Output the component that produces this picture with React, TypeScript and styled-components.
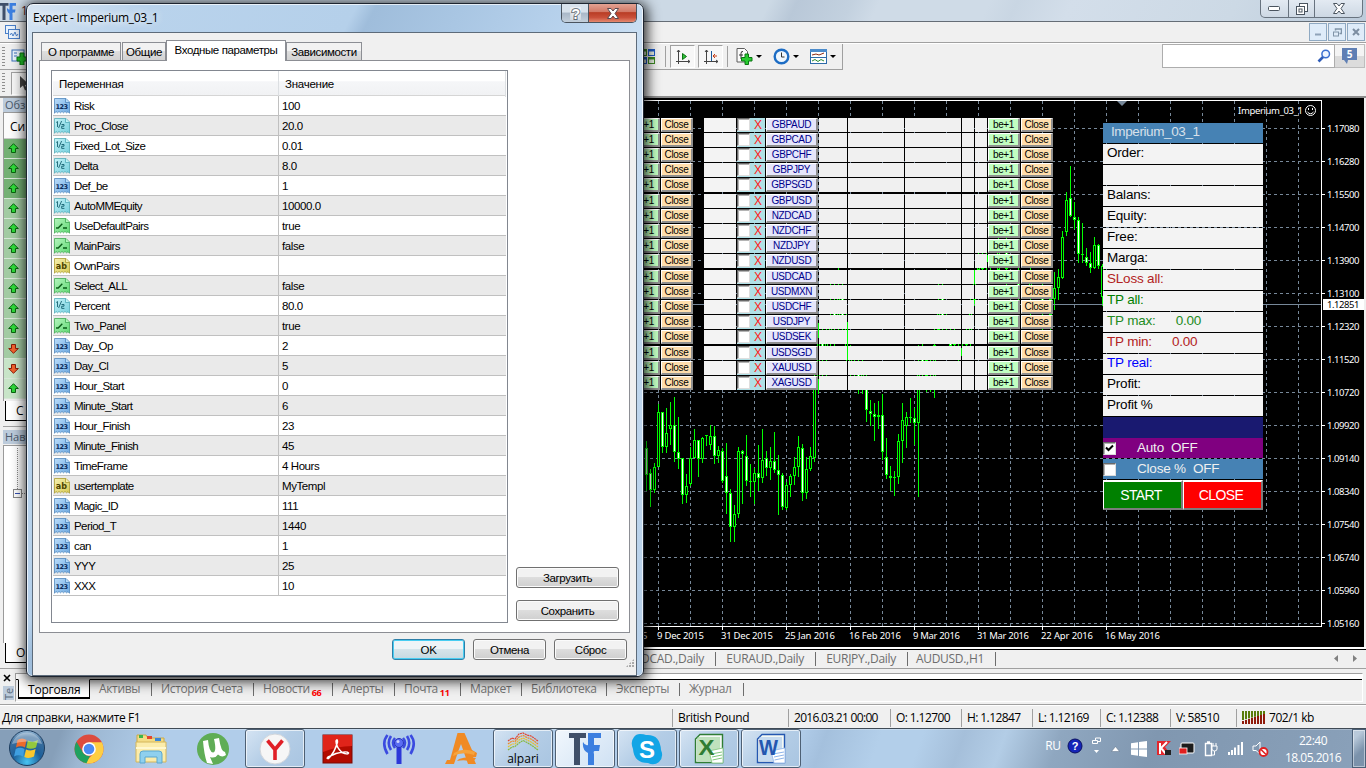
import React from "react";
import styled, { createGlobalStyle, css } from "styled-components";

const UI = `"Open Sans", "Noto Sans", sans-serif`;
const SANS = `"Liberation Sans", Arial, sans-serif`;

const Global = createGlobalStyle`
  * { box-sizing: border-box; }
  body { margin: 0; overflow: hidden; background: #000; }
  svg { display: block; flex: none; }
`;

const Desktop = styled.div`
  position: relative;
  width: 1366px;
  height: 768px;
  overflow: hidden;
  display: flex;
  flex-direction: column;
  background: #f0f0f0;
  font: 12px ${UI};
  color: #000;
  white-space: pre;
`;

/* ---------- main window chrome ---------- */

const TitleBar = styled.div`
  height: 22px;
  flex: none;
  display: flex;
  justify-content: space-between;
  border-bottom: 1px solid #656d76;
  background: linear-gradient(115deg, #ccd9e5 0 56%, #b9c8d8 58%, #c3d1df 62%, #cfdbe7 64% 72%, #c9d6e3 74%, #d3deea 78%, #ccd9e5 90%, #bccbdb 100%);
`;

const AppTitle = styled.div`
  display: flex;
  gap: 5px;
  padding-top: 3px;
  line-height: 15px;
  color: #5a1a1a;
`;

const WindowButtons = styled.div`
  display: flex;
  width: 103px;
  height: 18px;
  margin-right: 3px;
  border: 1px solid #68737f;
  border-top: 0;
  border-radius: 0 0 5px 5px;
  background: linear-gradient(#e3eaf2, #cdd8e4);
  overflow: hidden;
`;

const WindowButton = styled.div<{ $w: number }>`
  width: ${(p) => p.$w}px;
  display: flex;
  align-items: center;
  justify-content: center;
  border-right: 1px solid #68737f;
  &:last-child { border-right: 0; }
`;

const MenuBar = styled.div`
  height: 22px;
  flex: none;
  display: flex;
  align-items: center;
  justify-content: space-between;
  padding: 0 1px 1px 4px;
  border-bottom: 1px solid #fff;
  box-shadow: inset 0 -1px 0 #a0a0a0;
`;

const MdiButtons = styled.div`
  display: flex;
  gap: 1px;
`;

const MdiButton = styled.div`
  width: 18px;
  height: 18px;
  display: flex;
  align-items: center;
  justify-content: center;
  border: 1px solid #8fa9c2;
  background: #dfecf9;
`;

const ToolArea = styled.div`
  height: 52px;
  flex: none;
  display: flex;
  justify-content: space-between;
`;

const ToolBars = styled.div`
  width: 843px;
`;

const ToolBar = styled.div<{ $bordered?: boolean }>`
  height: 26px;
  display: flex;
  align-items: center;
  padding: 0 0 0 2px;
  ${(p) => p.$bordered && css`
    border-right: 1px solid #a0a0a0;
    border-bottom: 1px solid #a0a0a0;
  `}
`;

const Grip = styled.div`
  width: 3px;
  height: 20px;
  background: repeating-linear-gradient(#8f8f8f 0 1px, transparent 1px 3px);
`;

const LeftTools = styled.div`
  display: flex;
  align-items: center;
  gap: 6px;
  flex: none;
  width: 638px;
`;

const PressedTool = styled.div`
  width: 25px;
  height: 23px;
  flex: none;
  display: flex;
  align-items: center;
  justify-content: center;
  border: 1px solid #a0a0a0;
  border-right-color: #fff;
  border-bottom-color: #fff;
  background: #f7f7f7;
`;

const PressedPair = styled.div`
  display: flex;
  gap: 3px;
`;

const ToolSeparator = styled.div<{ $l: number; $r: number }>`
  width: 1px;
  height: 21px;
  flex: none;
  margin: 0 ${(p) => p.$r}px 0 ${(p) => p.$l}px;
  background: #a0a0a0;
`;

const DropTool = styled.div`
  display: flex;
  align-items: center;
  flex: none;
  width: 37px;
  gap: 3px;
`;

const Caret = styled.div`
  border: 3px solid transparent;
  border-top: 3px solid #000;
  border-bottom: 0;
`;

const SearchGroup = styled.div`
  display: flex;
  height: 24px;
  margin: 0 1px;
`;

const SearchBox = styled.div`
  width: 173px;
  display: flex;
  align-items: center;
  justify-content: flex-end;
  padding-right: 3px;
  border: 1px solid #adadad;
  background: #fff;
`;

const ChatButton = styled.div`
  width: 30px;
  display: flex;
  align-items: center;
  justify-content: center;
  border: 1px solid #bdbdbd;
  border-left: 0;
  background: linear-gradient(#f4f4f4 50%, #dcdcdc 50%);
`;

/* ---------- workspace ---------- */

const Workspace = styled.div`
  height: 572px;
  flex: none;
  display: flex;
  border-top: 2px solid #8d8d8d;
`;

const Dock = styled.div`
  width: 620px;
  flex: none;
  padding-left: 3px;
`;

const DockTitle = styled.div`
  height: 14px;
  padding-left: 2px;
  font-size: 11px;
  line-height: 13px;
  color: #4b5a6b;
  background: #bccbdb;
`;

const MarketList = styled.div`
  height: 289px;
  border-left: 1px solid #9a9a9a;
  border-top: 1px solid #9a9a9a;
`;

const MarketHead = styled.div`
  height: 26px;
  padding: 5px 0 0 6px;
  background: #fbfbfb;
  border-bottom: 1px solid #c8c8c8;
`;

const MarketRow = styled.div<{ $bg: string }>`
  height: 20px;
  padding: 4px 0 0 4px;
  border-bottom: 1px solid #d7e6d7;
  background: ${(p) => p.$bg};
`;

const DockTab = styled.div`
  width: 60px;
  height: 20px;
  margin-left: 2px;
  padding: 0 0 0 10px;
  line-height: 19px;
  border: 1px solid #000;
  border-top: 0;
  background: #fff;
`;

const TreeBox = styled.div`
  height: 198px;
  margin-top: 1px;
  border-left: 1px solid #9a9a9a;
  border-top: 1px solid #9a9a9a;
  background: #fff;
`;

const ChartWindow = styled.div`
  flex: 1;
  display: flex;
  flex-direction: column;
`;

const ChartArea = styled.div`
  position: relative;
  height: 549px;
  width: 744px;
  background: #000;
`;

const ChartTabs = styled.div`
  height: 21px;
  display: flex;
  align-items: center;
  border-top: 2px solid #fff;
  box-shadow: inset 0 1px 0 #000;
  color: #6d6d6d;
  letter-spacing: -0.3px;
`;

const ChartTab = styled.div<{ $w: number }>`
  width: ${(p) => p.$w}px;
  height: 14px;
  line-height: 13px;
  padding-right: 11px;
  text-align: right;
  border-right: 1px solid #6d6d6d;
`;

const ScrollArrows = styled.div`
  margin-left: auto;
  margin-right: 8px;
  display: flex;
  gap: 14px;
`;

/* ---------- pair panel over the chart ---------- */

const PairPanel = styled.div<{ $x: number }>`
  position: absolute;
  left: ${(p) => p.$x}px;
  top: 20px;
  display: flex;
  flex-direction: column;
  gap: 2px;
  font: 10px ${SANS};
`;

const PairGroup = styled.div`
  display: grid;
  gap: 1px;
`;

const PairRow = styled.div<{ $cols: string }>`
  display: grid;
  height: 14px;
  column-gap: 1px;
  grid-template-rows: 14px;
  grid-template-columns: ${(p) => p.$cols};
`;

const Cell = styled.div<{ $bg?: string }>`
  background: ${(p) => p.$bg ?? "#f0f0f0"};
`;

const PairButton = styled.div<{ $bg: string; $fg?: string }>`
  height: 14px;
  border: 1px solid #fff;
  border-right: 2px solid #8f8f8f;
  border-bottom: 2px solid #8f8f8f;
  background: ${(p) => p.$bg};
  color: ${(p) => p.$fg ?? "#000"};
  line-height: 12px;
  text-align: center;
  letter-spacing: -0.35px;
`;

const CheckCell = styled.div`
  display: grid;
  grid-template-columns: 13px 16px;
  height: 14px;
  background: #b0e0e6;
  color: #ff2020;
  font-size: 12px;
  line-height: 14px;
  text-align: center;
`;

const CheckBox = styled.span`
  display: flex;
  align-items: center;
  justify-content: center;
  width: 13px;
  height: 13px;
  background: #fff;
  border: 1px solid #dedede;
  border-top-color: #6a6a6a;
  border-left-color: #6a6a6a;
  box-shadow: inset 1px 1px 0 #b4b4b4;
`;

/* ---------- info panel over the chart ---------- */

const InfoPanel = styled.div`
  position: absolute;
  left: 483px;
  top: 25px;
  width: 160px;
  font: 13.5px ${SANS};
  letter-spacing: -0.2px;
`;

const InfoRow = styled.div<{ $bg?: string; $fg?: string; $h?: number; $gap?: number }>`
  height: ${(p) => p.$h ?? 20}px;
  margin-bottom: ${(p) => p.$gap ?? 1}px;
  padding-left: 4px;
  line-height: 18px;
  background: ${(p) => p.$bg ?? "#f3f3f3"};
  color: ${(p) => p.$fg ?? "#000"};
`;

const HeadRow = styled(InfoRow)`
  padding-left: 8px;
  letter-spacing: -0.4px;
`;

const InfoValue = styled.span<{ $ml: number }>`
  margin-left: ${(p) => p.$ml}px;
`;

const SwitchRow = styled(InfoRow)`
  display: flex;
  align-items: center;
  padding-left: 0;
  gap: 21px;
`;

const ActionRow = styled.div`
  display: grid;
  grid-template-columns: 80px 80px;
  height: 30px;
`;

const ActionButton = styled.div<{ $bg: string }>`
  display: flex;
  align-items: center;
  justify-content: center;
  padding-right: 3px;
  border: 2px solid #fff;
  border-left-width: 1px;
  border-right-color: #7c7c7c;
  border-bottom-color: #7c7c7c;
  background: ${(p) => p.$bg};
  color: #fff;
  font-size: 14px;
  letter-spacing: -0.6px;
`;

/* ---------- terminal strip, status bar ---------- */

const Terminal = styled.div`
  height: 36px;
  flex: none;
  display: flex;
  border-top: 1px solid #a0a0a0;
`;

const TerminalSide = styled.div`
  width: 15px;
  padding: 5px 0 0 3px;
  font-size: 11px;
`;

const SideLabel = styled.div`
  width: 11px;
  height: 14px;
  margin-top: 4px;
  writing-mode: vertical-rl;
  transform: rotate(180deg);
  line-height: 11px;
  color: #5a6a7a;
  background: #bccbdb;
`;

const TerminalBody = styled.div`
  flex: 1;
  margin: 4px 3px 2px 0;
  border: 1px solid #a0a0a0;
  border-right-color: #fff;
  border-bottom-color: #fff;
  background: linear-gradient(#fff 5px, #000 5px 6px, #f0f0f0 6px);
`;

const TerminalTabs = styled.div`
  display: flex;
  padding: 5px 0 0 2px;
  color: #747474;
  font-size: 12px;
`;

const TerminalTab = styled.div<{ $w: number; $active?: boolean }>`
  width: ${(p) => p.$w}px;
  height: 20px;
  padding-left: 9px;
  line-height: 19px;
  letter-spacing: -0.35px;
  ${(p) => p.$active
    ? css`
        border: 1px solid #000;
        border-top-color: #fff;
        border-bottom-width: 2px;
        background: #fff;
        color: #000;
        letter-spacing: -0.2px;
      `
    : css`
        background: linear-gradient(#6d6d6d, #6d6d6d) right 4px / 1px 13px no-repeat;
      `}
`;

const Badge = styled.sub`
  margin-left: 2px;
  color: #f00;
  font: bold 9px/1 ${UI};
  letter-spacing: -0.3px;
  vertical-align: -3px;
`;

const StatusBar = styled.div`
  height: 25px;
  flex: none;
  display: flex;
  align-items: center;
  padding: 2px 0 0 2px;
  border-top: 1px solid #a0a0a0;
  border-bottom: 1px solid #3f4a55;
  box-shadow: inset 0 1px 0 #fff;
`;

const StatusCell = styled.div<{ $w: number; $ls?: number }>`
  width: ${(p) => p.$w}px;
  height: 18px;
  line-height: 17px;
  padding-left: 5px;
  border-left: 1px solid #a0a0a0;
  display: flex;
  align-items: center;
  gap: 4px;
  letter-spacing: ${(p) => p.$ls ?? -0.6}px;
`;

const StatusHint = styled.div`
  width: 670px;
  letter-spacing: -0.38px;
`;

/* ---------- taskbar ---------- */

const TaskBar = styled.div`
  height: 39px;
  flex: none;
  display: flex;
  align-items: center;
  background:
    linear-gradient(rgba(255,255,255,.25) 0 1px, transparent 1px),
    linear-gradient(110deg, #869fb9 0 4.5%, #9cb7d2 6.5%, #b1cdea 12% 58%, #a4c0dd 60%, #b3cfea 64% 67%, #a5bfda 70%, #b3cde6 73%, #8fa7c0 77%, #8097b0 84%, #8aa1ba 100%);
`;

const StartSlot = styled.div`
  width: 58px;
  height: 39px;
  padding-left: 8px;
`;

const TaskSlot = styled.div<{ $state?: "open" | "active" }>`
  width: 60px;
  height: 39px;
  margin: 0 1px;
  display: flex;
  align-items: center;
  justify-content: center;
  ${(p) => p.$state && css`
    border: 1px solid #4e6074;
    border-radius: 3px;
    box-shadow: inset 0 0 0 1px rgba(255, 255, 255, 0.65);
    background: ${p.$state === "active"
      ? "linear-gradient(135deg, #f1f7fd, #cfe1f3)"
      : "linear-gradient(135deg, #d5e4f3 0, #b4cde6 50%, #a9c5e1 100%)"};
  `}
`;

const Tray = styled.div`
  margin-left: auto;
  display: flex;
  align-items: center;
  height: 39px;
  color: #fff;
`;

const TrayItem = styled.div<{ $w: number }>`
  width: ${(p) => p.$w}px;
  display: flex;
  justify-content: center;
  letter-spacing: -0.4px;
`;

const TrayTop = styled(TrayItem)`
  margin-bottom: 6px;
`;

const TrayClock = styled.div`
  width: 78px;
  text-align: center;
  line-height: 17px;
  letter-spacing: -0.5px;
`;

const ShowDesktop = styled.div`
  width: 14px;
  height: 39px;
  border: 1px solid #4b6078;
  box-shadow: inset 0 0 0 1px rgba(255, 255, 255, 0.45);
  background: linear-gradient(135deg, #b9c9da 20%, #7b92ab 60%);
`;

/* ---------- dialog ---------- */

const Dialog = styled.div`
  position: absolute;
  left: 26px;
  top: 3px;
  width: 618px;
  height: 674px;
  display: flex;
  flex-direction: column;
  padding: 0 6px 6px 5px;
  border: 1px solid #1e2530;
  border-radius: 7px 7px 6px 6px;
  background: linear-gradient(118deg, #d6e4f2 0, #b9d3ec 12%, #b5d0ea 34%, #9fbddb 36%, #a9c6e3 45%, #bad4ee 58%, #c9def2 64%, #b6cfe8 100%);
  box-shadow: inset 0 0 0 1px rgba(255, 255, 255, 0.7), 1px 2px 13px 2px rgba(0, 0, 0, 0.85);
`;

const DialogTitle = styled.div`
  display: flex;
  justify-content: space-between;
  height: 28px;
  flex: none;
  padding-left: 1px;
  line-height: 28px;
  letter-spacing: -0.32px;
  text-shadow: 0 0 8px #fff, 0 0 8px #fff;
`;

const DialogButtons = styled.div`
  display: flex;
  width: 76px;
  height: 19px;
  border: 1px solid #4a545f;
  border-top: 0;
  border-radius: 0 0 5px 5px;
  overflow: hidden;
`;

const HelpButton = styled.div`
  width: 27px;
  display: flex;
  justify-content: center;
  align-items: center;
  background: linear-gradient(#d8e2ec 45%, #a9b8c8 50%, #c3cfdb);
  border-right: 1px solid #4a545f;
`;

const CloseButton = styled.div`
  flex: 1;
  display: flex;
  justify-content: center;
  align-items: center;
  background: linear-gradient(#e3a292, #d27a68 42%, #b93d25 48%, #c9503a 75%, #e58a70);
`;

const DialogClient = styled.div`
  flex: 1;
  display: flex;
  flex-direction: column;
  border: 1px solid #5d6b7a;
  background: #f0f0f0;
  padding: 7px 6px 8px 6px;
  font: 11.5px ${SANS};
  letter-spacing: -0.38px;
`;

const TabStrip = styled.div`
  display: flex;
  align-items: flex-end;
  height: 20px;
  flex: none;
  padding-left: 2px;
`;

const DialogTab = styled.div<{ $w: number; $gap?: number; $active?: boolean }>`
  width: ${(p) => p.$w}px;
  height: ${(p) => (p.$active ? 21 : 18)}px;
  margin-bottom: ${(p) => (p.$active ? -1 : 0)}px;
  margin-right: ${(p) => p.$gap ?? 0}px;
  position: relative;
  line-height: ${(p) => (p.$active ? 19 : 18)}px;
  text-align: center;
  border: 1px solid #8c8e94;
  border-bottom: 0;
  background: ${(p) => (p.$active ? "#fff" : "linear-gradient(#f2f2f2 45%, #dedede 50%, #d2d2d2)")};
`;

const TabPage = styled.div`
  height: 573px;
  flex: none;
  width: 591px;
  display: flex;
  padding: 9px 10px 9px 11px;
  border: 1px solid #8c8e94;
  background: #fff;
`;

const ParamTable = styled.div`
  width: 457px;
  height: 553px;
  border: 1px solid #828790;
  padding: 0 1px;
`;

const ParamHead = styled.div`
  display: grid;
  grid-template-columns: 226px 1fr;
  height: 25px;
  border-bottom: 1px solid #d5d5d5;
  background: linear-gradient(#fff 40%, #f5f6f8 45%, #f1f2f4);
  line-height: 26px;
  letter-spacing: -0.25px;
  & > span { padding-left: 6px; border-right: 1px solid #dcdfe2; }
`;

const ParamRow = styled.div<{ $alt: boolean }>`
  display: grid;
  grid-template-columns: 225px 1fr;
  height: 20px;
  border-bottom: 1px solid #c0c0c0;
  background: ${(p) => (p.$alt ? "#eaeaea" : "#fff")};
  line-height: 20px;
  letter-spacing: -0.57px;
`;

const ParamName = styled.div`
  display: flex;
  align-items: center;
  gap: 4px;
  padding-left: 1px;
`;

const ParamValue = styled.div`
  padding-left: 3px;
  border-left: 1px solid #c0c0c0;
  letter-spacing: -0.42px;
`;

const SideButtons = styled.div`
  display: flex;
  flex-direction: column;
  justify-content: flex-end;
  gap: 12px;
  padding: 0 0 2px 8px;
`;

const Button = styled.div<{ $w: number; $primary?: boolean }>`
  width: ${(p) => p.$w}px;
  height: 21px;
  line-height: 20px;
  text-align: center;
  border: 1px solid ${(p) => (p.$primary ? "#2d7fa8" : "#707070")};
  border-radius: 3px;
  box-shadow: ${(p) => (p.$primary ? "inset 0 0 0 1px #48cdf2" : "inset 0 0 0 1px #fbfbfb")};
  background: linear-gradient(#f2f2f2 45%, #dddddd 50%, #cfcfcf);
  ${(p) => p.$primary && css`background: linear-gradient(#eef4f7 45%, #d5e4ea 50%, #c6d9e1);`}
`;

const DialogFooter = styled.div`
  display: flex;
  justify-content: flex-end;
  gap: 8px;
  padding: 6px 3px 0 0;
`;

const SizeGrip = styled.div`
  width: 8px;
  height: 8px;
  margin: -1px -4px 0 auto;
  background: radial-gradient(circle at 1px 1px, #a9a9a9 1px, transparent 1.2px) 0 0 / 3px 3px;
  clip-path: polygon(100% 0, 100% 100%, 0 100%);
`;

/* ---------- data ---------- */

type Kind = "int" | "real" | "bool" | "str";
const params: [Kind, string, string][] = [
  ["int", "Risk", "100"],
  ["real", "Proc_Close", "20.0"],
  ["real", "Fixed_Lot_Size", "0.01"],
  ["real", "Delta", "8.0"],
  ["int", "Def_be", "1"],
  ["real", "AutoMMEquity", "10000.0"],
  ["bool", "UseDefaultPairs", "true"],
  ["bool", "MainPairs", "false"],
  ["str", "OwnPairs", ""],
  ["bool", "Select_ALL", "false"],
  ["real", "Percent", "80.0"],
  ["bool", "Two_Panel", "true"],
  ["int", "Day_Op", "2"],
  ["int", "Day_Cl", "5"],
  ["int", "Hour_Start", "0"],
  ["int", "Minute_Start", "6"],
  ["int", "Hour_Finish", "23"],
  ["int", "Minute_Finish", "45"],
  ["int", "TimeFrame", "4 Hours"],
  ["str", "usertemplate", "MyTempl"],
  ["int", "Magic_ID", "111"],
  ["int", "Period_T", "1440"],
  ["int", "can", "1"],
  ["int", "YYY", "25"],
  ["int", "XXX", "10"],
];

const kinds: Record<Kind, { hi: string; lo: string; line: string; ink: string }> = {
  int: { hi: "#b9dcfb", lo: "#6fa9e0", line: "#4f86bd", ink: "#0b2c5c" },
  real: { hi: "#c3f3f8", lo: "#76cfdd", line: "#4fa9b8", ink: "#15616f" },
  bool: { hi: "#b4f5bd", lo: "#5fd873", line: "#3fa852", ink: "#0a5c18" },
  str: { hi: "#f6f0b0", lo: "#d9cb55", line: "#a89a30", ink: "#4c4200" },
};

const pairGroups = [
  ["GBPAUD", "GBPCAD", "GBPCHF", "GBPJPY", "GBPSGD"],
  ["GBPUSD", "NZDCAD", "NZDCHF", "NZDJPY", "NZDUSD"],
  ["USDCAD", "USDMXN", "USDCHF", "USDJPY", "USDSEK"],
  ["USDSGD", "XAUUSD", "XAGUSD"],
];

/* x, high, low, body top, body bottom, filled */
type Candle = [number, number, number, number, number, 0 | 1];
const candles: Candle[] = [
  [646, 441, 491, 448, 475, 1], [650, 469, 507, 473, 490, 1], [654, 463, 493, 467, 490, 0],
  [658, 404, 467, 412, 467, 0], [662, 412, 453, 412, 447, 1], [666, 408, 453, 433, 447, 0],
  [670, 402, 445, 425, 429, 0], [674, 397, 462, 425, 452, 1], [678, 417, 469, 452, 459, 1],
  [682, 458, 504, 458, 495, 1], [686, 474, 503, 486, 495, 0], [690, 447, 486, 458, 484, 0],
  [694, 429, 458, 440, 458, 0], [698, 440, 477, 440, 459, 1], [702, 437, 463, 438, 459, 0],
  [706, 435, 446, 435, 436, 0], [710, 425, 450, 436, 445, 0], [714, 426, 464, 436, 456, 1],
  [718, 446, 463, 450, 456, 0], [722, 448, 483, 451, 481, 1], [726, 443, 514, 476, 493, 1],
  [730, 489, 542, 493, 527, 1], [734, 505, 542, 514, 527, 0], [738, 447, 518, 451, 514, 0],
  [742, 450, 504, 451, 454, 1], [746, 435, 486, 456, 481, 1], [750, 464, 497, 481, 482, 0],
  [754, 468, 504, 473, 482, 0], [758, 445, 491, 473, 478, 1], [762, 429, 483, 460, 478, 0],
  [766, 451, 476, 458, 468, 1], [770, 447, 480, 461, 468, 0], [774, 432, 473, 461, 470, 1],
  [778, 455, 515, 470, 475, 1], [782, 473, 510, 475, 507, 1], [786, 482, 510, 485, 508, 0],
  [790, 474, 497, 476, 485, 0], [794, 457, 485, 467, 476, 0], [798, 436, 477, 447, 467, 0],
  [802, 444, 501, 448, 493, 1], [806, 457, 499, 469, 493, 0], [810, 447, 471, 456, 469, 0],
  [814, 375, 462, 385, 458, 0], [818, 323, 394, 337, 380, 0], [822, 329, 376, 340, 360, 1],
  [826, 328, 376, 336, 350, 0], [830, 284, 350, 318, 340, 0], [834, 284, 346, 300, 325, 1],
  [838, 268, 330, 290, 318, 0], [842, 284, 330, 298, 322, 1], [846, 310, 361, 322, 360, 0],
  [850, 345, 376, 352, 366, 0], [854, 360, 380, 366, 372, 1], [858, 358, 394, 374, 380, 1],
  [862, 360, 394, 374, 384, 0], [866, 362, 422, 376, 410, 1], [870, 400, 426, 411, 414, 1],
  [874, 403, 441, 414, 417, 1], [878, 401, 429, 415, 417, 0], [882, 394, 460, 415, 452, 1],
  [886, 438, 479, 457, 475, 1], [890, 466, 491, 476, 478, 1], [894, 471, 496, 477, 478, 0],
  [898, 434, 484, 441, 477, 0], [902, 403, 463, 420, 441, 0], [906, 412, 448, 417, 426, 0],
  [910, 398, 423, 417, 418, 0], [914, 408, 445, 418, 423, 1], [918, 345, 497, 370, 423, 0],
  [922, 344, 380, 350, 372, 1], [926, 352, 392, 360, 376, 0], [930, 358, 392, 362, 372, 1],
  [934, 329, 398, 345, 380, 0], [938, 284, 340, 300, 330, 0], [942, 284, 332, 298, 324, 1],
  [946, 312, 340, 318, 328, 0], [950, 328, 350, 334, 346, 1], [954, 328, 348, 338, 345, 0],
  [958, 344, 361, 348, 356, 1], [962, 340, 356, 348, 356, 0], [966, 328, 346, 332, 345, 0],
  [970, 299, 350, 306, 340, 0], [974, 270, 306, 283, 300, 0], [978, 252, 280, 262, 270, 0],
  [982, 252, 276, 258, 269, 1], [986, 250, 272, 255, 262, 0], [990, 254, 270, 258, 266, 0],
  [998, 238, 278, 250, 270, 0], [1006, 236, 290, 245, 269, 1], [1018, 262, 300, 270, 290, 1],
  [1030, 268, 315, 280, 299, 0], [1042, 284, 330, 298, 314, 1], [1050, 290, 330, 299, 315, 1],
  [1054, 272, 310, 288, 299, 0], [1058, 269, 300, 277, 288, 0], [1062, 231, 279, 237, 278, 0],
  [1066, 192, 236, 200, 232, 0], [1070, 166, 217, 198, 216, 1], [1074, 202, 229, 217, 220, 1],
  [1078, 217, 263, 220, 254, 1], [1082, 223, 263, 254, 255, 0], [1086, 248, 266, 257, 263, 1],
  [1090, 252, 273, 263, 268, 1], [1094, 237, 269, 245, 268, 0], [1098, 244, 269, 245, 266, 1],
  [1102, 264, 306, 266, 297, 0],
];

const prices = ["1.17080", "1.16280", "1.15500", "1.14700", "1.13900", "1.13100", "1.12320", "1.11520", "1.10720", "1.09920", "1.09140", "1.08340", "1.07540", "1.06740", "1.05960", "1.05160"];
const dates: [string, number][] = [
  ["9 Dec 2015", 47], ["31 Dec 2015", 52], ["25 Jan 2016", 50], ["16 Feb 2016", 52],
  ["9 Mar 2016", 47], ["31 Mar 2016", 52], ["22 Apr 2016", 52], ["16 May 2016", 55],
];

/* ---------- drawings ---------- */

const KindIcon = ({ kind }: { kind: Kind }) => {
  const c = kinds[kind];
  return (
    <svg width="16" height="16" viewBox="0 0 16 16">
      <defs>
        <linearGradient id={`k-${kind}`} x1="0" y1="0" x2="1" y2="1">
          <stop offset="0" stopColor={c.hi} />
          <stop offset="1" stopColor={c.lo} />
        </linearGradient>
      </defs>
      <path d="M.5.5H12L15.5 4V15.3L14 13.7 12.5 14.8 11 13.4 9.5 14.8 8 13.4 6.5 14.8 5 13.4 3.5 14.8 2 13.4.5 15.3Z" fill={`url(#k-${kind})`} stroke={c.line} strokeWidth=".8" />
      <path d="M11.5.5V4.5H15.5" fill={c.hi} stroke={c.line} strokeWidth=".8" />
      {kind === "int" && <text x="1.6" y="11.2" fontFamily="DejaVu Sans" fontWeight="700" fontSize="6.6" textLength="12" fill={c.ink}>123</text>}
      {kind === "real" && (
        <>
          <path d="M2.2 4.5L3.5 3.5V9M7.6 3L4.6 10" fill="none" stroke={c.ink} strokeWidth=".9" />
          <path d="M7.5 6.5H10V8.2H7.7V10.4H10.4" fill="none" stroke={c.ink} strokeWidth=".9" />
        </>
      )}
      {kind === "bool" && <path d="M2 10H4.2L8.3 5.8M9 10H13" fill="none" stroke={c.ink} strokeWidth="1.4" />}
      {kind === "str" && <text x="1.8" y="10.8" fontFamily="DejaVu Sans" fontWeight="700" fontSize="8" textLength="10.5" fill={c.ink}>ab</text>}
    </svg>
  );
};

const Chart = () => (
  <svg width="744" height="549" viewBox="620 98 744 549" shapeRendering="crispEdges">
    <g stroke="#778899" strokeDasharray="3 3">
      {Array.from({ length: 21 }, (_, i) => (
        <path key={i} d={`M${658.5 + i * 32} 101V626`} />
      ))}
      {prices.map((_, i) => (
        <path key={i} d={`M620 ${128.5 + i * 33}H1321`} />
      ))}
    </g>
    {candles.map(([x, hi, lo, t, b, f]) => (
      <g key={x}>
        <rect x={x} y={hi} width="1" height={lo - hi} fill="#0f0" />
        <rect x={x - 1} y={t} width="3" height={Math.max(1, b - t)} fill="#0f0" />
        {b - t > 2 && <rect x={x} y={t + 1} width="1" height={b - t - 2} fill={f ? "#fff" : "#000"} />}
      </g>
    ))}
    <path d="M620 304.5H1321" stroke="#778899" />
    <path d="M620 100.5H1321.5V626.5H620" fill="none" stroke="#fff" />
    {prices.map((p, i) => (
      <g key={p}>
        <path d={`M1322 ${128.5 + i * 33}H1325`} stroke="#fff" />
        <text x="1327" y={132 + i * 33} fontFamily="Noto Sans" fontSize="9.5" textLength="32.5" fill="#fff">{p}</text>
      </g>
    ))}
    <rect x="1323" y="299" width="41" height="11" fill="#fff" />
    <text x="1327" y="308" fontFamily="Noto Sans" fontSize="9.5" textLength="32.5" fill="#000">1.12851</text>
    <text x="642" y="639" fontFamily="Noto Sans" fontSize="9.5" fill="#fff">5</text>
    {dates.map(([d, w], i) => (
      <g key={d}>
        <path d={`M${658.5 + i * 64} 627V630`} stroke="#fff" />
        <text x={657 + i * 64} y="639" fontFamily="Noto Sans" fontSize="9.5" textLength={w} fill="#fff">{d}</text>
      </g>
    ))}
    <path d="M1117 101H1127L1122 106Z" fill="#778899" shapeRendering="auto" />
    <text x="1238" y="113.5" fontFamily="Noto Sans" fontSize="9.5" textLength="65" fill="#fff">Imperium_03_1</text>
    <g shapeRendering="auto" stroke="#fff" fill="none">
      <circle cx="1310.5" cy="110.5" r="5" />
      <path d="M1307.5 112Q1310.5 115.5 1313.5 112M1308.5 108V110M1312.5 108V110" />
    </g>
  </svg>
);

const MarketArrow = ({ up }: { up: boolean }) => (
  <svg width="11" height="11" viewBox="0 0 11 11">
    <path
      d={up ? "M5.5.7L10.3 5.5H7.5V9.5H3.5V5.5H.7Z" : "M5.5 10.3L10.3 5.5H7.5V1.5H3.5V5.5H.7Z"}
      fill={up ? "#2fd83a" : "#f2622e"}
      stroke={up ? "#0a6410" : "#8c1c08"}
    />
  </svg>
);

const TfLogo = ({ w, h }: { w: number; h: number }) => (
  <svg width={w} height={h} viewBox="0 0 32 32" preserveAspectRatio="none">
    <path d="M0 0H17V5H11V32H5V5H0Z" fill="#3f4f69" />
    <path d="M19 0H32V5H25V12H31L30 18H26Q24 18 25 21V32H19V20Q13 17 14 9Q16 13 19 12Z" fill="#3c7fe0" />
  </svg>
);

const Orb = () => (
  <svg width="38" height="38" viewBox="0 0 38 38">
    <defs>
      <radialGradient id="orb" cx=".5" cy=".9" r=".9">
        <stop offset="0" stopColor="#48c4f2" />
        <stop offset=".45" stopColor="#1c5f9a" />
        <stop offset=".8" stopColor="#3c6f9e" />
        <stop offset="1" stopColor="#9fc0dc" />
      </radialGradient>
    </defs>
    <circle cx="19" cy="19" r="17.5" fill="url(#orb)" stroke="#1c3c5e" />
    <path d="M9.5 11Q14 8 18.5 11L17 18.5Q12.5 16 8 18.5Z" fill="#ec6a2b" />
    <path d="M19.8 11.5Q24.5 14 30 11L28 18.5Q23 21 18.3 18.8Z" fill="#93c83d" />
    <path d="M7.7 20Q12 17.5 16.5 20L15 27.5Q10.5 25 6 27.5Z" fill="#3f9fe0" />
    <path d="M18 20.5Q23 22.5 27.6 20L26 27.5Q21 30 16.3 28Z" fill="#fbc72c" />
    <path d="M4 15A15.5 15.5 0 0 1 34 15Q19 10 4 15Z" fill="#fff" opacity=".35" />
  </svg>
);

const ChromeIcon = () => (
  <svg width="30" height="30" viewBox="0 0 30 30">
    <circle cx="15" cy="15" r="14.5" fill="#dd4b3e" />
    <path d="M15 8.3H27.9A14.5 14.5 0 0 1 14.5 29.5L10 29L21 18.2Z" fill="#fece43" />
    <path d="M2.5 7.8L9.5 19.5Q12 22.5 16 21.8L12.5 29.3A14.5 14.5 0 0 1 2.5 7.8Z" fill="#1fa15f" />
    <circle cx="15" cy="15" r="6.8" fill="#fff" />
    <circle cx="15" cy="15" r="5.3" fill="#4b8af4" />
  </svg>
);

const FolderIcon = () => (
  <svg width="34" height="30" viewBox="0 0 34 30">
    <path d="M3 1H12L14 4H30V26H3Z" fill="#f3dc85" stroke="#c9a94a" />
    <path d="M5 1H9V4H5Z" fill="#3bb54a" />
    <path d="M13 2H18V5H13Z" fill="#e4452f" />
    <path d="M21 4H27V7H21Z" fill="#3a86d8" />
    <path d="M2 8H32V28H2Z" fill="#fbecab" stroke="#d4b65b" />
    <path d="M2 14H32" stroke="#fff8d0" strokeWidth="2" />
    <path d="M6 29V20Q6 17 9 17H25Q28 17 28 20V29H23V23H11V29Z" fill="#8fd0ee" stroke="#5ba7cf" />
  </svg>
);

const UTorrentIcon = () => (
  <svg width="34" height="34" viewBox="0 0 34 34">
    <circle cx="17" cy="17" r="16" fill="#5fad56" />
    <path d="M7 9L12 8Q13 20 17 20.5Q21 20 18 7L23 6Q25 20 29 20L30 23Q26 26 22 22.5Q19 27 14 25L17 32L11 31Q8 22 7 9Z" fill="#fff" />
  </svg>
);

const YandexIcon = () => (
  <svg width="32" height="32" viewBox="0 0 32 32">
    <circle cx="16" cy="16" r="15" fill="#f6f6f6" stroke="#d2d6db" />
    <path d="M8.5 7.5L16 16.5V27M23.5 7.5L16 16.5" fill="none" stroke="#e01f26" strokeWidth="3.6" />
  </svg>
);

const PdfIcon = () => (
  <svg width="31" height="30" viewBox="0 0 31 30">
    <rect x="1" y="1" width="29" height="28" fill="#b30b00" stroke="#7a0a05" />
    <path d="M1 1H30V12Q15 12 1 18Z" fill="#e0241a" />
    <path d="M6 23Q4 25 6.5 24.5Q13 18 15.5 8Q15.5 4 14 7Q14 13 20 18.5Q26 21 26.5 19Q25 16.5 14 19.5Q8 22 6 23Z" fill="none" stroke="#fff" strokeWidth="1.5" />
  </svg>
);

const AntennaIcon = () => (
  <svg width="34" height="32" viewBox="0 0 34 32">
    <g fill="none" stroke="#3b4be0" strokeWidth="2.6">
      <path d="M13 5Q9 9.5 13 15M9 3Q4.5 10 9 17M5.5 2Q-1 10 5.5 21" />
      <path d="M21 5Q25 9.5 21 15M25 3Q29.5 10 25 17M28.5 2Q35 10 28.5 21" />
    </g>
    <rect x="14.5" y="12" width="5" height="19" fill="#2c37d8" />
    <circle cx="17" cy="10" r="4.5" fill="#5a6cf2" stroke="#2732b8" />
    <circle cx="16" cy="8.5" r="1.5" fill="#cdd4ff" />
  </svg>
);

const AIcon = () => (
  <svg width="33" height="32" viewBox="0 0 33 32">
    <path d="M12.5 0H19.5L27 17L32 20L31 24H28L31 31H23L16 11L13 19L11 25L9 31H0L2 27H5Z" fill="#f08a24" />
    <path d="M9 20Q18 14 30 19L29 22Q18 18 8 23Z" fill="#f6a33c" />
    <path d="M14 26Q22 23 31 25L28 29Q20 26 12 28Z" fill="#f08a24" />
  </svg>
);

const AlpariText = styled.div`
  display: flex;
  flex-direction: column;
  align-items: center;
  font: 12px/13px ${UI};
  letter-spacing: 0;
`;

const AlpariIcon = () => (
  <AlpariText>
    <svg width="32" height="20" viewBox="0 0 32 20">
      {["#e2452f", "#f08a24", "#e9c02c", "#86b93c"].map((c, i) => (
        <path key={c} d={`M1 ${9 + i * 3}L5 ${6 + i * 3}L8 ${7 + i * 2.5}L12 ${2 + i * 3}L16 ${1 + i * 2.5}L20 ${3 + i * 2.5}L24 ${4 + i * 3}L27 ${6 + i * 3}L31 ${9 + i * 3}`} fill="none" stroke={c} strokeWidth="1.2" strokeDasharray="2 .6" />
      ))}
    </svg>
    alpari
  </AlpariText>
);

const SkypeIcon = () => (
  <svg width="32" height="32" viewBox="0 0 32 32">
    <path d="M9 1Q13 1 15 2Q29 1 30 17Q33 24 28 29Q23 33 17 30Q3 30 2 16Q-1 9 3 4Q5 1 9 1Z" fill="#12a5e6" />
    <text x="16" y="24.5" textAnchor="middle" fontFamily="Liberation Sans" fontWeight="700" fontSize="24" fill="#fff">S</text>
  </svg>
);

const OfficeIcon = ({ letter, dark, light, w }: { letter: string; dark: string; light: string; w: number }) => (
  <svg width="32" height="32" viewBox="0 0 32 32">
    <path d="M7 1.5H29.5V29.5H2.5V6Z" fill="#f4f9f4" stroke={dark} strokeWidth="1.4" />
    <path d="M4 4H27V28H4Z" fill={light} opacity=".45" />
    <path d="M16 18L30 15V30H19Z" fill="#fff" stroke={light} strokeWidth=".8" />
    <path d="M18 21L29 19M19 24L29 22M19.5 27L29 25" stroke={light} />
    <text x="13.5" y="22" textAnchor="middle" fontFamily="Liberation Sans" fontWeight="700" fontSize="22" textLength={w} lengthAdjust="spacingAndGlyphs" fill={dark}>{letter}</text>
  </svg>
);

const buttonCols = "32px 32px";
const pairCols = "32px 28px 52px 28px 56px 56px 12px 12px 32px 32px";

const rowGreens = ["#74b074", "#74b074", "#74b074", "#a3cba3", "#a3cba3", "#a3cba3", "#a3cba3", "#a3cba3", "#a3cba3", "#a3cba3", "#a3cba3", "#c8e4c8", "#c8e4c8"];

export default function App() {
  return (
    <Desktop>
      <Global />
      <TitleBar>
        <AppTitle><TfLogo w={16} h={17} />1</AppTitle>
        <WindowButtons>
          <WindowButton $w={28}>
            <svg width="12" height="5"><rect x=".5" y=".5" width="11" height="4" rx="1" fill="#fff" stroke="#4a545f" /></svg>
          </WindowButton>
          <WindowButton $w={27}>
            <svg width="12" height="12" fill="#fff" stroke="#4a545f"><rect x="3.5" y=".5" width="8" height="8" /><rect x=".5" y="3.5" width="8" height="8" /><rect x="3" y="6" width="3" height="3" /></svg>
          </WindowButton>
          <WindowButton $w={47}>
            <svg width="12" height="11" viewBox="0 0 12 11"><path d="M.5.5H4L6 3L8 .5H11.5L8 5.5L11.5 10.5H8L6 8L4 10.5H.5L4 5.5Z" fill="#fff" stroke="#4a545f" /></svg>
          </WindowButton>
        </WindowButtons>
      </TitleBar>

      <MenuBar>
        <svg width="16" height="15" viewBox="0 0 16 15" fill="#eaf3fd" stroke="#4a7fc8">
          <rect x="1.5" y=".5" width="10" height="8" /><rect x="4.5" y="4.5" width="11" height="9" />
          <path d="M6 10L7.5 8L9 11L11 7L12.5 11L14 9" fill="none" />
        </svg>
        <MdiButtons>
          <MdiButton><svg width="8" height="8"><path d="M1 6.5H7" stroke="#8fa3b8" strokeWidth="2" /></svg></MdiButton>
          <MdiButton><svg width="9" height="9" fill="none" stroke="#8094a8"><path d="M2.5 2.5V1H8.5V5.5H6.5" strokeWidth="1.5" /><rect x=".5" y="4" width="5" height="4" /></svg></MdiButton>
          <MdiButton><svg width="8" height="8"><path d="M1 1L7 7M7 1L1 7" stroke="#7c8ea2" strokeWidth="2" /></svg></MdiButton>
        </MdiButtons>
      </MenuBar>

      <ToolArea>
        <ToolBars>
          <ToolBar $bordered>
            <LeftTools>
              <Grip />
              <svg width="16" height="16" viewBox="0 0 16 16"><rect x="1" y="1" width="12" height="11" fill="#eaf3fd" stroke="#3a6fb8" /><path d="M3 4H6M3 7H6" stroke="#3a6fb8" /><path d="M9 4H13V8H16V12H13V16H9V12H6V8H9Z" fill="#22c32b" stroke="#0b7412" /></svg>
            </LeftTools>
            <svg width="16" height="16" viewBox="0 0 16 16">
              <path d="M0 0H7V7H0ZM8 8H15V15H8Z" fill="#3c8a22" /><path d="M8 0H15V7H8ZM0 8H7V15H0Z" fill="#1e5bc6" />
              <path d="M1 2.5H6V6H1ZM9 2.5H14V6H9ZM1 10.5H6V14H1ZM9 10.5H14V14H9Z" fill="#e9f1e4" />
            </svg>
            <ToolSeparator $l={9} $r={4} />
            <PressedPair>
              <PressedTool>
                <svg width="16" height="16" viewBox="0 0 16 16" fill="none" stroke="#444"><path d="M3.5 1V15M1 12.5H15M2 3L3.5 1L5 3M13 11L15 12.5L13 14" /><path d="M7.5 4.5V10.5L11.5 7.5Z" fill="#2fbf3a" stroke="#0b7412" /></svg>
              </PressedTool>
              <PressedTool>
                <svg width="16" height="16" viewBox="0 0 16 16" fill="none" stroke="#444"><path d="M3.5 1V15M1 12.5H15M2 3L3.5 1L5 3M13 11L15 12.5L13 14" /><path d="M8.5 2V12" stroke="#1e5b9a" /><path d="M14 7H10M12 5L10 7L12 9" stroke="#c43a12" /></svg>
              </PressedTool>
            </PressedPair>
            <ToolSeparator $l={4} $r={8} />
            <DropTool>
              <svg width="17" height="17" viewBox="0 0 17 17"><path d="M1 .5H8.5L11.5 3.5V14H1Z" fill="#fbfbfb" stroke="#5d5d5d" /><path d="M7 3.5Q5 3 5 5.5V11M3 7H7" fill="none" stroke="#333" /><path d="M9 6H12.5V9.5H16V13H12.5V16.5H9V13H5.5V9.5H9Z" fill="#27cb30" stroke="#0b7412" /></svg>
              <Caret />
            </DropTool>
            <DropTool>
              <svg width="17" height="17" viewBox="0 0 17 17"><circle cx="8.5" cy="8.5" r="6.8" fill="#eef6fd" stroke="#1c6cc4" strokeWidth="2.4" /><path d="M8.5 4.5V9H11.5" fill="none" stroke="#333" /></svg>
              <Caret />
            </DropTool>
            <DropTool>
              <svg width="17" height="15" viewBox="0 0 17 15"><rect x=".5" y=".5" width="16" height="14" fill="#fff" stroke="#2c6aa8" /><path d="M0 1.5H17" stroke="#4c8ccc" strokeWidth="3" /><path d="M0 8.5H17" stroke="#2c6aa8" /><path d="M2 6L6 5L9 6L14 4" stroke="#8c2a12" fill="none" /><path d="M2 12L5 10.5L8 12.5L11 10.5L14 12" stroke="#2a8c32" fill="none" /></svg>
              <Caret />
            </DropTool>
          </ToolBar>
          <ToolBar>
            <LeftTools>
              <Grip />
              <PressedTool><svg width="10" height="15" viewBox="0 0 10 15"><path d="M1 0V12L4 9.5L6 14.5L8 13.5L6 9L10 8.5Z" fill="#444" /></svg></PressedTool>
            </LeftTools>
          </ToolBar>
        </ToolBars>
        <SearchGroup>
          <SearchBox>
            <svg width="14" height="14" viewBox="0 0 14 14"><circle cx="8.7" cy="5" r="3.8" fill="#eef5ff" stroke="#3b6fd0" strokeWidth="1.5" /><path d="M6 8L1.5 12.5" stroke="#2f5cb8" strokeWidth="2.6" /></svg>
          </SearchBox>
          <ChatButton>
            <svg width="17" height="16" viewBox="0 0 17 16"><path d="M1 0H16V12H7L6 16L3 12H1Z" fill="#5f7fb4" /><text x="8.5" y="10" textAnchor="middle" fontFamily="Noto Sans" fontWeight="700" fontSize="10" fill="#fff">5</text></svg>
          </ChatButton>
        </SearchGroup>
      </ToolArea>

      <Workspace>
        <Dock>
          <DockTitle>Обз</DockTitle>
          <MarketList>
            <MarketHead>Си</MarketHead>
            {rowGreens.map((g, i) => (
              <MarketRow key={i} $bg={g}><MarketArrow up={i !== 10 && i !== 11} /></MarketRow>
            ))}
          </MarketList>
          <DockTab>С</DockTab>
          <svg width="60" height="9"><path d="M0 5.5H60" stroke="#a0a0a0" /></svg>
          <DockTitle>Нав</DockTitle>
          <TreeBox>
            <svg width="22" height="120"><path d="M13.5 2V43M18 47.5H22" stroke="#888" strokeDasharray="1 1" /><rect x="9.5" y="43.5" width="8" height="8" fill="#fff" stroke="#888" /><path d="M11 47.5H16" stroke="#3550b0" /></svg>
          </TreeBox>
          <DockTab>О</DockTab>
        </Dock>
        <ChartWindow>
          <ChartArea>
            <Chart />
            <PairPanel $x={8}>
              {pairGroups.map((g, i) => (
                <PairGroup key={i}>
                  {g.map((s) => (
                    <PairRow key={s} $cols={buttonCols}>
                      <PairButton $bg="#c1ffc1">be+1</PairButton>
                      <PairButton $bg="#ffdead">Close</PairButton>
                    </PairRow>
                  ))}
                </PairGroup>
              ))}
            </PairPanel>
            <PairPanel $x={84}>
              {pairGroups.map((g, i) => (
                <PairGroup key={i}>
                  {g.map((s) => (
                    <PairRow key={s} $cols={pairCols}>
                      <Cell $bg="#f3f3f3" />
                      <CheckCell><CheckBox />X</CheckCell>
                      <PairButton $bg="#e6e6fa" $fg="#00008b">{s}</PairButton>
                      <Cell /><Cell /><Cell /><Cell /><Cell />
                      <PairButton $bg="#c1ffc1">be+1</PairButton>
                      <PairButton $bg="#ffdead">Close</PairButton>
                    </PairRow>
                  ))}
                </PairGroup>
              ))}
            </PairPanel>
            <InfoPanel>
              <HeadRow $bg="#4682b4" $fg="#d8e0ea">Imperium_03_1</HeadRow>
              <InfoRow>Order:</InfoRow>
              <InfoRow />
              <InfoRow>Balans:</InfoRow>
              <InfoRow>Equity:</InfoRow>
              <InfoRow>Free:</InfoRow>
              <InfoRow>Marga:</InfoRow>
              <InfoRow $fg="#b22222">SLoss all:</InfoRow>
              <InfoRow $fg="#008000">TP all:</InfoRow>
              <InfoRow $fg="#228b22">TP max:<InfoValue $ml={20}>0.00</InfoValue></InfoRow>
              <InfoRow $fg="#b22222">TP min:<InfoValue $ml={20}>0.00</InfoValue></InfoRow>
              <InfoRow $fg="#0000ff">TP real:</InfoRow>
              <InfoRow>Profit:</InfoRow>
              <InfoRow>Profit %</InfoRow>
              <InfoRow $bg="#191970" $h={21} $gap={0} />
              <SwitchRow $bg="#800080" $fg="#f0f0f0">
                <CheckBox><svg width="9" height="9" viewBox="0 0 9 9"><path d="M1 3.5L3.5 6L8 1.5" fill="none" stroke="#000" strokeWidth="2" /></svg></CheckBox>
                Auto  OFF
              </SwitchRow>
              <SwitchRow $bg="#4682b4" $fg="#f0f0f0"><CheckBox />Close %  OFF</SwitchRow>
              <ActionRow>
                <ActionButton $bg="#008000">START</ActionButton>
                <ActionButton $bg="#ff0000">CLOSE</ActionButton>
              </ActionRow>
            </InfoPanel>
          </ChartArea>
          <ChartTabs>
            <ChartTab $w={96}>USDCAD.,Daily</ChartTab>
            <ChartTab $w={100}>EURAUD.,Daily</ChartTab>
            <ChartTab $w={92}>EURJPY.,Daily</ChartTab>
            <ChartTab $w={88}>AUDUSD.,H1</ChartTab>
            <ScrollArrows>
              <svg width="5" height="7"><path d="M4 0V7L0 3.5Z" fill="#808080" /></svg>
              <svg width="5" height="7"><path d="M0 0V7L4 3.5Z" fill="#808080" /></svg>
            </ScrollArrows>
          </ChartTabs>
        </ChartWindow>
      </Workspace>

      <Terminal>
        <TerminalSide>
          <svg width="8" height="8"><path d="M1 1L7 7M7 1L1 7" stroke="#000" strokeWidth="1.6" /></svg>
          <SideLabel>Те</SideLabel>
        </TerminalSide>
        <TerminalBody>
          <TerminalTabs>
            <TerminalTab $w={72} $active>Торговля</TerminalTab>
            <TerminalTab $w={62}>Активы</TerminalTab>
            <TerminalTab $w={102}>История Счета</TerminalTab>
            <TerminalTab $w={79}>Новости<Badge>66</Badge></TerminalTab>
            <TerminalTab $w={62}>Алерты</TerminalTab>
            <TerminalTab $w={66}>Почта<Badge>11</Badge></TerminalTab>
            <TerminalTab $w={61}>Маркет</TerminalTab>
            <TerminalTab $w={85}>Библиотека</TerminalTab>
            <TerminalTab $w={73}>Эксперты</TerminalTab>
            <TerminalTab $w={64}>Журнал</TerminalTab>
          </TerminalTabs>
        </TerminalBody>
      </Terminal>

      <StatusBar>
        <StatusHint>Для справки, нажмите F1</StatusHint>
        <StatusCell $w={116} $ls={-0.35}>British Pound</StatusCell>
        <StatusCell $w={102} $ls={-0.7}>2016.03.21 00:00</StatusCell>
        <StatusCell $w={71}>O: 1.12700</StatusCell>
        <StatusCell $w={71}>H: 1.12847</StatusCell>
        <StatusCell $w={68}>L: 1.12169</StatusCell>
        <StatusCell $w={70}>C: 1.12388</StatusCell>
        <StatusCell $w={66} $ls={-0.6}>V: 58510</StatusCell>
        <StatusCell $w={120} $ls={-0.45}>
          <svg width="23" height="13">
            {Array.from({ length: 8 }, (_, i) => (
              <g key={i}>
                <rect x={i * 3} y="0" width="2" height={9 - i * 0.8} fill="#5a7d0a" />
                <rect x={i * 3} y={10 - i} width="2" height={3 + i} fill="#8f1a0a" />
              </g>
            ))}
          </svg>
          702/1 kb
        </StatusCell>
      </StatusBar>

      <TaskBar>
        <StartSlot><Orb /></StartSlot>
        <TaskSlot><ChromeIcon /></TaskSlot>
        <TaskSlot><FolderIcon /></TaskSlot>
        <TaskSlot><UTorrentIcon /></TaskSlot>
        <TaskSlot $state="open"><YandexIcon /></TaskSlot>
        <TaskSlot><PdfIcon /></TaskSlot>
        <TaskSlot><AntennaIcon /></TaskSlot>
        <TaskSlot><AIcon /></TaskSlot>
        <TaskSlot $state="open"><AlpariIcon /></TaskSlot>
        <TaskSlot $state="active"><TfLogo w={32} h={32} /></TaskSlot>
        <TaskSlot $state="open"><SkypeIcon /></TaskSlot>
        <TaskSlot $state="open"><OfficeIcon letter="X" dark="#2f7d34" light="#7fc67a" w={16} /></TaskSlot>
        <TaskSlot $state="open"><OfficeIcon letter="W" dark="#2457b0" light="#8fb5ea" w={19} /></TaskSlot>
        <Tray>
          <TrayTop $w={24}>RU</TrayTop>
          <TrayTop $w={20}>
            <svg width="16" height="16"><circle cx="8" cy="8" r="7" fill="#1424b8" stroke="#0a1060" /><text x="8" y="12" textAnchor="middle" fontFamily="Liberation Sans" fontWeight="700" fontSize="11" fill="#fff">?</text></svg>
          </TrayTop>
          <TrayTop $w={22}>
            <svg width="9" height="18" fill="none" stroke="#fff"><path d="M3.5 3V1H8.5V4.5H6M.5 3.5H5.5V6.5H.5Z" /><path d="M2 13H7L4.5 16Z" fill="#fff" stroke="none" /></svg>
          </TrayTop>
          <TrayItem $w={16}><svg width="9" height="6"><path d="M4.5.5L8.5 5.5H.5Z" fill="#fff" stroke="#5b6f86" strokeWidth=".5" /></svg></TrayItem>
          <TrayItem $w={32}><svg width="16" height="16" fill="#fff"><path d="M0 2.2L7 1.2V7.5H0ZM8 1L16 0V7.5H8ZM0 8.5H7V14.8L0 13.8ZM8 8.5H16V16L8 15Z" /></svg></TrayItem>
          <TrayItem $w={18}><svg width="15" height="15"><path d="M0 0H14L8 6L14 14H0Z" fill="#e3262c" /><path d="M3 2V13M10 1L4 7L9 13" stroke="#fff" strokeWidth="2" fill="none" /><rect x="8" y="9" width="6" height="5" fill="#222" /></svg></TrayItem>
          <TrayItem $w={28}><svg width="16" height="13"><rect x="2" y="1" width="13" height="10" rx="1" fill="#1c1c1c" stroke="#fff" /><rect x="0" y="6" width="8" height="6" fill="#e02020" stroke="#fff" strokeWidth=".8" /></svg></TrayItem>
          <TrayItem $w={20}><svg width="15" height="16" fill="none" stroke="#fff"><path d="M1.5 2.5H7.5V14.5H1.5ZM3 1H6" strokeWidth="1.4" /><path d="M8 5H13V8Q13 10 10.5 10Q8 10 8 8ZM9 2V5M12 2V5M10.5 10V14H8" fill="#8097b0" /></svg></TrayItem>
          <TrayItem $w={30}><svg width="16" height="13" fill="#fff"><path d="M0 10H2V13H0ZM3 8H5V13H3ZM6 5.5H8V13H6ZM9.5 3H11.5V13H9.5ZM13 0H15V13H13Z" /></svg></TrayItem>
          <TrayItem $w={18}><svg width="17" height="16"><path d="M1 5H4L8 1V13L4 9.5H1Z" fill="#8097b0" stroke="#fff" /><circle cx="11.5" cy="11" r="4" fill="#fff" stroke="#e02020" strokeWidth="1.8" /><path d="M9 8.5L14 13.5" stroke="#e02020" strokeWidth="1.6" /></svg></TrayItem>
          <TrayItem $w={5} />
          <TrayClock>22:40<br />18.05.2016</TrayClock>
          <ShowDesktop />
        </Tray>
      </TaskBar>

      <Dialog>
        <DialogTitle>
          Expert - Imperium_03_1
          <DialogButtons>
            <HelpButton><svg width="11" height="13"><text x="5.5" y="11.5" textAnchor="middle" fontFamily="Liberation Sans" fontWeight="700" fontSize="14" fill="#fff" stroke="#4a545f" strokeWidth="2" paintOrder="stroke">?</text></svg></HelpButton>
            <CloseButton><svg width="12" height="11" viewBox="0 0 12 11"><path d="M.5.5H4L6 3L8 .5H11.5L8 5.5L11.5 10.5H8L6 8L4 10.5H.5L4 5.5Z" fill="#fff" stroke="#5a4a50" /></svg></CloseButton>
          </DialogButtons>
        </DialogTitle>
        <DialogClient>
          <TabStrip>
            <DialogTab $w={80} $gap={1}>О программе</DialogTab>
            <DialogTab $w={44}>Общие</DialogTab>
            <DialogTab $w={120} $active>Входные параметры</DialogTab>
            <DialogTab $w={76}>Зависимости</DialogTab>
          </TabStrip>
          <TabPage>
            <ParamTable>
              <ParamHead><span>Переменная</span><span>Значение</span></ParamHead>
              {params.map(([k, n, v], i) => (
                <ParamRow key={n} $alt={i % 2 === 1}>
                  <ParamName><KindIcon kind={k} />{n}</ParamName>
                  <ParamValue>{v}</ParamValue>
                </ParamRow>
              ))}
            </ParamTable>
            <SideButtons>
              <Button $w={103}>Загрузить</Button>
              <Button $w={103}>Сохранить</Button>
            </SideButtons>
          </TabPage>
          <DialogFooter>
            <Button $w={73} $primary>OK</Button>
            <Button $w={73}>Отмена</Button>
            <Button $w={73}>Сброс</Button>
          </DialogFooter>
          <SizeGrip />
        </DialogClient>
      </Dialog>
    </Desktop>
  );
}
